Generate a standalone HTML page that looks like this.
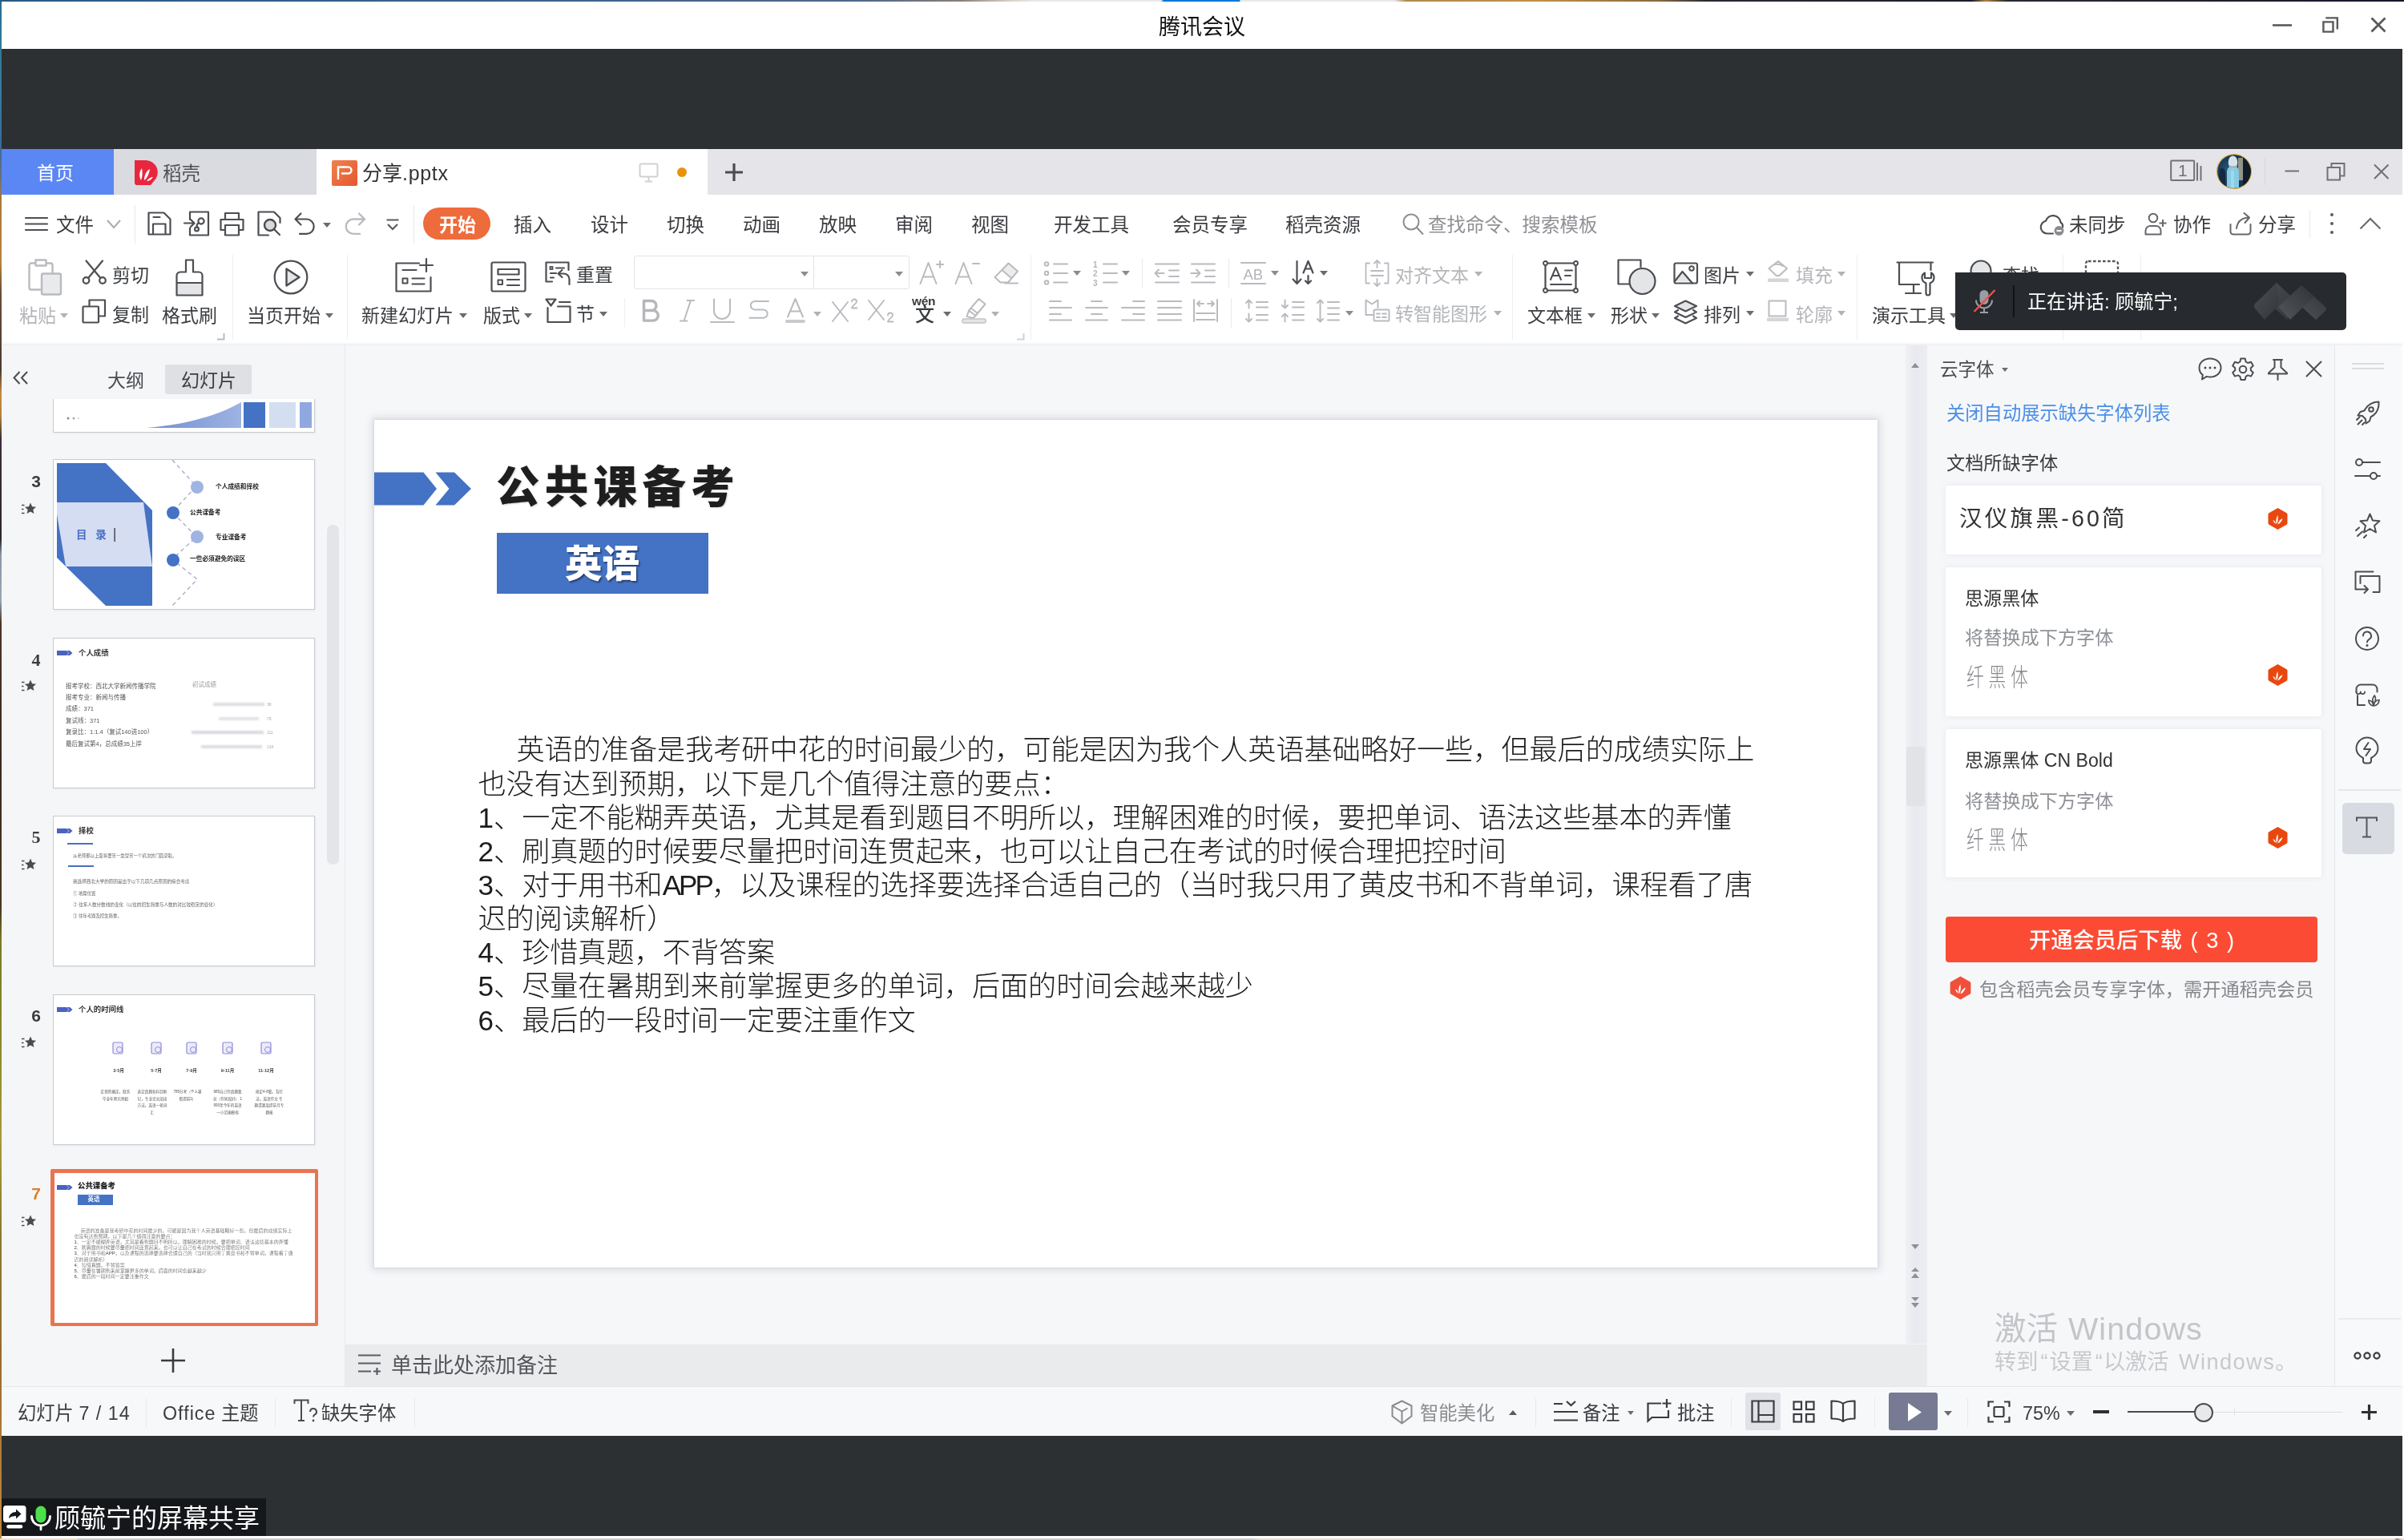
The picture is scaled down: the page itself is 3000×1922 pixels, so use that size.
<!DOCTYPE html>
<html lang="zh-CN">
<head>
<meta charset="utf-8">
<title>腾讯会议</title>
<style>
*{margin:0;padding:0;box-sizing:border-box}
html,body{width:3000px;height:1922px;overflow:hidden}
body{position:relative;will-change:transform;background:#e9dccf;font-family:"Liberation Sans","Noto Sans CJK SC",sans-serif;color:#3a3c40;font-size:23px}
.a{position:absolute}
.t{position:absolute;white-space:nowrap;line-height:32px;height:32px}
svg{position:absolute;overflow:visible}
.ic{fill:none;stroke:#4c4e52;stroke-width:2.2;stroke-linecap:round;stroke-linejoin:round}
.ig{fill:none;stroke:#b9bbbf;stroke-width:2.4;stroke-linecap:round;stroke-linejoin:round}
.car{position:absolute;width:0;height:0;border-left:5px solid transparent;border-right:5px solid transparent;border-top:6px solid #6a6c70}
.carg{border-top-color:#b0b2b6}
.rt{font-size:23px;color:#3a3c40}
.mt{top:265px;font-size:23.5px;color:#3a3c40}
.th{width:327px;height:188px;background:#fff;border:1px solid #c9cbd1;overflow:hidden;box-shadow:1px 1px 2px rgba(0,0,0,.06)}
.tn{font-family:"Liberation Serif","Noto Serif CJK SC",serif;font-weight:700;font-size:22px;color:#3a3c40;line-height:30px;height:30px;width:14px;text-align:center}
.tns{font-family:"Liberation Sans",sans-serif;font-size:21px}
.tl{font-size:7.700px;font-weight:700;color:#222;line-height:12px;height:12px}
.tt{font-size:9.400px;font-weight:700;color:#333;line-height:16px;height:16px}
.tb{font-size:7.500px;color:#555;line-height:12px;height:12px}
.ts{font-size:5.400px;color:#666;line-height:10px;height:10px}
.tm{font-size:5.600px;font-weight:700;color:#444;line-height:10px;height:10px;text-align:center}
.td{font-size:4.600px;color:#555;line-height:8.500px;width:38px;text-align:center;word-break:break-all}
.tx{font-size:6px;font-weight:300;color:#444;line-height:7.200px;white-space:nowrap}
.cd{background:#fff;border-radius:3px;box-shadow:0 0 6px rgba(200,203,212,.35)}
.xh{font-size:27px;font-weight:300;color:#85878b;letter-spacing:7.500px;line-height:40px;height:40px;transform:scale(.8,1.12);transform-origin:0 50%}
.st{top:1748px;font-size:23.300px;color:#3a3c40}
.vs{position:absolute;width:1px;background:#e9eaec}
</style>
</head>
<body>
<!-- desktop strips -->
<div class="a" style="left:0;top:0;width:3px;height:1922px;background:linear-gradient(#2d6a92 0,#2f7a96 3%,#3a7a9c 6%,#3a6a9a 9.500%,#6a6f7a 11.500%,#a87a3c 13%,#b8843c 17%,#6a4e38 19%,#4a3a32 24%,#c58a3e 25.500%,#b8803c 27%,#3a2f3a 28.500%,#2c2630 35%,#8a96a6 36%,#9aa6b4 39%,#4a3426 40.500%,#3a2a1e 50%,#4a3822 59%,#7a7a2a 61%,#8a8a2e 68%,#a89a3a 74%,#8a7a30 80%,#9a6a30 88%,#b07a38 94%,#c08a3e 100%)"></div>
<div class="a" style="left:0;top:0;width:3000px;height:2px;background:linear-gradient(90deg,#2a5a84 0,#3a628c 20%,#50688a 36%,#8a8078 40%,#d8d0c8 42%,#e8e8e8 43%,#e8e8e8 48.300%,#0078d7 48.400%,#0078d7 51.550%,#e8e8e8 51.600%,#e8e8e8 58%,#b08a50 58.500%,#c09048 64%,#8a6a40 69%,#2a2a34 71%,#1a1e2c 82%,#b08040 82.600%,#2a2a34 83.500%,#15182a 100%)"></div>
<div class="a" style="left:0;top:1920px;width:3000px;height:2px;background:linear-gradient(90deg,#ecdccb 0,#ecdccb 3.200%,#c9c9c9 3.250%,#c9c9c9 52%,#e9dccf 52.500%,#e9dccf 99.600%,#8a7a70 99.700%,#e9dccf 99.900%)"></div>
<!-- meeting window -->
<div id="win" class="a" style="left:2px;top:2px;width:2998px;height:1918px;background:#fff"></div>
<div id="titlebar" class="a" style="left:2px;top:1.500px;width:2998px;height:59.500px;background:#fff"></div>
<div id="dark1" class="a" style="left:2px;top:61px;width:2996px;height:125px;background:#2c3033"></div>
<div id="dark2" class="a" style="left:2px;top:1792px;width:2996px;height:125px;background:#2c3033"></div>
<!-- shared screen -->
<div id="screen" class="a" style="left:2px;top:186px;width:2996px;height:1606px;background:#f5f6f8;overflow:hidden">
</div>

<!-- ===== title bar ===== -->
<div class="t" style="left:1446px;top:17px;font-size:27px;color:#111;line-height:34px;height:34px">腾讯会议</div>
<svg style="left:2836px;top:20px" width="150" height="24" viewBox="0 0 150 24">
 <path d="M0 11.5h24" stroke="#58595b" stroke-width="2.6" fill="none"/>
 <path d="M63.400 7.400h12.100v12.200h-12.100z M66.300 2.350h14.550v14.250" stroke="#58595b" stroke-width="2.400" fill="none"/>
 <path d="M123.5 2.5l17 17M140.5 2.5l-17 17" stroke="#58595b" stroke-width="2.8" fill="none"/>
</svg>

<!-- ===== WPS tab bar ===== -->
<div class="a" style="left:2px;top:186px;width:2996px;height:57px;background:#e5e5e9"></div>
<div class="a" style="left:2px;top:186px;width:140px;height:57px;background:#5b87f4"></div>
<div class="t" style="left:46px;top:200px;font-size:23px;color:#fff">首页</div>
<div class="a" style="left:142px;top:186px;width:253px;height:57px;background:#d9dbe0"></div>
<svg style="left:167px;top:200px" width="30" height="32" viewBox="0 0 30 32">
 <path d="M1 0h14a15 15 0 0 1 10 26l-4 5H4a3 3 0 0 1-3-3z" fill="#e8273f"/>
 <path d="M9 25c-3-6-2-11 1-15 1 5 1 10-1 15z M13 25c0-7 3-12 7-14-1 6-3 11-7 14z M16 26c2-3 5-5 8-5-2 3-5 5-8 5z" fill="#fff"/>
</svg>
<div class="t" style="left:203px;top:201px;font-size:23.5px;color:#4e5054">稻壳</div>
<div class="a" style="left:395px;top:186px;width:488px;height:58px;background:#fff"></div>
<svg style="left:414px;top:200px" width="32" height="32" viewBox="0 0 32 32">
 <defs><linearGradient id="pg" x1="0" y1="0" x2="1" y2="1"><stop offset="0" stop-color="#f0814f"/><stop offset="1" stop-color="#e5572d"/></linearGradient></defs>
 <rect x="0" y="0" width="32" height="32" rx="2" fill="url(#pg)"/>
 <path d="M8 24V8.5h12.5a4 4 0 0 1 0 8H12" fill="none" stroke="#fff" stroke-width="2.4"/>
</svg>
<div class="t" style="left:452px;top:199px;font-size:25px;color:#333;line-height:34px;height:34px">分享<span style="letter-spacing:.700px">.pptx</span></div>
<svg style="left:797px;top:203px" width="26" height="26" viewBox="0 0 26 26">
 <rect x="1.5" y="1.5" width="22" height="16" rx="2" fill="none" stroke="#cfd1d5" stroke-width="2"/>
 <path d="M12.5 18v5M8 23.5h9" stroke="#cfd1d5" stroke-width="2" fill="none"/>
</svg>
<div class="a" style="left:845px;top:209px;width:12px;height:12px;border-radius:6px;background:#e8930c"></div>
<svg style="left:904px;top:203px" width="24" height="24" viewBox="0 0 24 24"><path d="M12 1v22M1 12h22" stroke="#4a4c50" stroke-width="3.2" fill="none"/></svg>
<!-- right controls -->
<svg style="left:2707px;top:199px" width="44" height="30" viewBox="0 0 44 30">
 <rect x="2.200" y="1.500" width="29" height="24.500" rx="1" fill="none" stroke="#707276" stroke-width="2"/>
 <path d="M35 4v22.500M39.500 8v18.500" stroke="#707276" stroke-width="2" fill="none"/>
</svg>
<div class="t" style="left:2718px;top:198px;font-size:21px;color:#707276;line-height:30px;height:30px">1</div>
<svg style="left:2765px;top:191px" width="46" height="46" viewBox="0 0 46 46"><defs><clipPath id="avc"><circle cx="23" cy="23" r="20.800"/></clipPath><radialGradient id="avg" cx=".4" cy=".5" r=".7"><stop offset="0" stop-color="#2c5f80"/><stop offset=".6" stop-color="#173650"/><stop offset="1" stop-color="#0f1e30"/></radialGradient></defs><circle cx="23" cy="23" r="22" fill="#d2a548"/><g clip-path="url(#avc)"><rect x="0" y="0" width="46" height="46" fill="url(#avg)"/><rect x="28" y="6" width="6.500" height="28" fill="#a9a48e" opacity=".85"/><rect x="34" y="4" width="10" height="40" fill="#101c2a"/><path d="M5 20c3-2 6-1 7 3v20H3z" fill="#122a42"/><path d="M14 46V24c0-5 3-8 7.500-8s7.500 3 7.500 8v22z" fill="#86cbe4"/><path d="M19 46V22h4v24z" fill="#a9def0" opacity=".7"/><ellipse cx="21.500" cy="11.500" rx="5.800" ry="8" fill="#d4e3ea"/><path d="M16.500 14c1 3 9 3 10.500 0l-1 5h-8z" fill="#9fb8c4"/></g></svg>
<div class="vs" style="left:2826px;top:197px;height:34px;background:#d6d7db"></div>
<svg style="left:2848px;top:200px" width="140" height="28" viewBox="0 0 140 28">
 <path d="M3.500 13.500h17.500" stroke="#707276" stroke-width="2" fill="none"/>
 <path d="M56.500 9h15.500v15.500H56.500z M61.500 8.500V4h16v15.500H73" stroke="#707276" stroke-width="2" fill="none"/>
 <path d="M115 5.500l17.500 17.500M132.500 5.500L115 23" stroke="#707276" stroke-width="2.100" fill="none"/>
</svg>

<!-- ===== menu row ===== -->
<div class="a" style="left:2px;top:243px;width:2996px;height:187px;background:#fff"></div>
<svg style="left:31px;top:270px" width="30" height="20" viewBox="0 0 30 20"><path class="ic" d="M1 2h27M1 9.5h27M1 17h27" style="stroke-width:2.2"/></svg>
<div class="t mt" style="left:70px">文件</div>
<svg style="left:133px;top:274px" width="18" height="12" viewBox="0 0 18 12"><path d="M1 1l8 9 8-9" fill="none" stroke="#a9abaf" stroke-width="2"/></svg>
<div class="vs" style="left:168px;top:256px;height:48px"></div>
<svg style="left:184px;top:264px" width="30" height="30" viewBox="0 0 30 30"><path class="ic" d="M1.5 1.5h19l8 8v19h-27z M7 28V15.5h15.5V28 M7.5 7h8"/></svg>
<svg style="left:229px;top:263px" width="33" height="32" viewBox="0 0 33 32"><path class="ic" d="M8 11V1.500h23v29H8v-9 M1 15.500h12 M9 11l4.500 4.500L9 20"/><circle class="ic" cx="22" cy="13" r="3.600"/><circle class="ic" cx="16.500" cy="23" r="2.400"/><path class="ic" d="M19 15.500c-3 1-3 4-1 5.500"/></svg>
<svg style="left:274px;top:264px" width="32" height="32" viewBox="0 0 32 32"><path class="ic" d="M7 10V2h17v8 M7 23H1.500V10h28v13H24 M7 17h17v12.500H7z"/></svg>
<svg style="left:321px;top:263px" width="32" height="32" viewBox="0 0 32 32"><path class="ic" d="M14 30.500H1.500v-29H21l7.500 7.500v6"/><circle cx="16" cy="18" r="7" fill="#d8d9dc" stroke="#4a4c50" stroke-width="2.400"/><path class="ic" d="M21.500 23.500l6.500 6.500"/></svg>
<svg style="left:367px;top:265px" width="28" height="30" viewBox="0 0 28 30"><path class="ic" d="M1.500 8.500h14a9.200 9.200 0 0 1 0 18.400H7 M8.500 1.500l-7 7 7 7"/></svg>
<div class="car" style="left:403px;top:278px"></div>
<svg style="left:430px;top:265px" width="28" height="30" viewBox="0 0 28 30"><path class="ig" d="M25 8.500H11a9.200 9.200 0 0 0 0 18.400h8 M18 1.500l7 7-7 7"/></svg>
<svg style="left:482px;top:273px" width="16" height="16" viewBox="0 0 16 16"><path d="M0.500 1.500h15M2 7l6 6 6-6" fill="none" stroke="#5a5c60" stroke-width="2.200"/></svg>
<div class="vs" style="left:516px;top:256px;height:48px"></div>
<div class="a" style="left:528px;top:259px;width:84px;height:40px;border-radius:20px;background:#ee6b3b"></div>
<div class="t mt" style="left:548px;color:#fff;font-weight:700;font-size:23px">开始</div>
<div class="t mt" style="left:641px">插入</div>
<div class="t mt" style="left:737px">设计</div>
<div class="t mt" style="left:832px">切换</div>
<div class="t mt" style="left:927px">动画</div>
<div class="t mt" style="left:1022px">放映</div>
<div class="t mt" style="left:1117px">审阅</div>
<div class="t mt" style="left:1212px">视图</div>
<div class="t mt" style="left:1315px">开发工具</div>
<div class="t mt" style="left:1463px">会员专享</div>
<div class="t mt" style="left:1604px">稻壳资源</div>
<svg style="left:1750px;top:266px" width="28" height="28" viewBox="0 0 28 28"><circle cx="11" cy="11" r="9.500" fill="none" stroke="#8a8c90" stroke-width="2"/><path d="M18 18l8 8.500" stroke="#8a8c90" stroke-width="2" fill="none"/></svg>
<div class="t mt" style="left:1782px;color:#8e9094">查找命令、搜索模板</div>
<svg style="left:2545px;top:265px" width="33" height="30" viewBox="0 0 33 30"><path class="ic" d="M17 26.500H9.500a8 8 0 0 1-1.500-15.800 9.500 9.500 0 0 1 18.500 1.800 6 6 0 0 1 2.500 6"/><circle cx="24.500" cy="23" r="6" fill="#8a8c90"/><path d="M21.500 23h6" stroke="#fff" stroke-width="2"/></svg>
<div class="t mt" style="left:2582px">未同步</div>
<svg style="left:2676px;top:264px" width="30" height="30" viewBox="0 0 30 30"><circle cx="11" cy="8" r="5.300" fill="none" stroke="#66686c" stroke-width="2"/><path d="M1.500 28.500v-4.500a6 6 0 0 1 6-6h7a6 6 0 0 1 6 6v4.500z" fill="none" stroke="#66686c" stroke-width="2" stroke-linejoin="round"/><path d="M23 10v9M18.500 14.500h9" stroke="#66686c" stroke-width="2" fill="none"/></svg>
<div class="t mt" style="left:2712px">协作</div>
<svg style="left:2782px;top:264px" width="30" height="30" viewBox="0 0 30 30"><path d="M1.500 16v9a3.500 3.500 0 0 0 3.500 3.500h18a3.500 3.500 0 0 0 3.500-3.500v-9" fill="none" stroke="#66686c" stroke-width="2" stroke-linecap="round"/><path d="M9 21c1-8 6-13 15-13.500M18.500 2l6.500 5.500-5.500 6.500" fill="none" stroke="#66686c" stroke-width="2" stroke-linecap="round" stroke-linejoin="round"/></svg>
<div class="t mt" style="left:2818px">分享</div>
<div class="vs" style="left:2882px;top:262px;height:36px"></div>
<div class="a" style="left:2908px;top:266px;width:4px;height:4px;border-radius:2px;background:#5a5c60;box-shadow:0 11px 0 #5a5c60,0 22px 0 #5a5c60"></div>
<svg style="left:2944px;top:271px" width="28" height="16" viewBox="0 0 28 16"><path d="M1.500 14.500l12.500-12.500 12.500 12.500" fill="none" stroke="#6a6c70" stroke-width="2.200"/></svg>

<!-- ===== ribbon (left part) ===== -->
<svg style="left:35px;top:323px" width="43" height="46" viewBox="0 0 43 46"><path class="ig" d="M9 5.500H4a2.500 2.500 0 0 0-2.500 2.500v28A2.500 2.500 0 0 0 4 38.500h11 M23 5.500h5a2.500 2.500 0 0 1 2.500 2.500v9 M9.500 1.500h13v7h-13z"/><rect x="17" y="18.500" width="24" height="26" rx="2" fill="#e9eaec" stroke="#b9bbbf" stroke-width="2.400"/></svg>
<div class="t rt" style="left:24px;top:378px;color:#b4b6ba">粘贴</div>
<div class="car carg" style="left:75px;top:391px"></div>
<svg style="left:102px;top:324px" width="32" height="31" viewBox="0 0 32 31"><path class="ic" d="M5.500 1.500l17.500 21M26 1.500L8.500 22.500"/><circle class="ic" cx="5.500" cy="26" r="3.800"/><circle class="ic" cx="26" cy="26" r="3.800"/></svg>
<div class="t rt" style="left:140px;top:328px">剪切</div>
<svg style="left:102px;top:373px" width="31" height="31" viewBox="0 0 31 31"><path class="ic" d="M9.500 9V1.500h19.500v20H21.500"/><rect class="ic" x="1.500" y="9.500" width="19.500" height="20" rx="1"/></svg>
<div class="t rt" style="left:140px;top:377px">复制</div>
<svg style="left:219px;top:323px" width="35" height="47" viewBox="0 0 35 47"><rect x="1.500" y="30" width="32" height="15.500" fill="#e4e5e7"/><path class="ic" d="M13 1.500h9v15h7a4.500 4.500 0 0 1 4.500 4.500v24.500h-32V21A4.500 4.500 0 0 1 6 16.500h7z M1.500 30h32"/></svg>
<div class="t rt" style="left:202px;top:378px">格式刷</div>
<svg style="left:271px;top:416px" width="10" height="9" viewBox="0 0 10 9"><path d="M8.500 0v7.500H0" fill="none" stroke="#b9bbbf" stroke-width="2"/></svg>
<div class="vs" style="left:290px;top:318px;height:106px;background:#eeeff1"></div>
<svg style="left:341px;top:324px" width="44" height="44" viewBox="0 0 44 44"><circle class="ic" cx="22" cy="22" r="20.300"/><path d="M16.500 11.500v21l16-10.500z" fill="#e4e5e7" stroke="#4a4c50" stroke-width="2.400" stroke-linejoin="round"/></svg>
<div class="t rt" style="left:308px;top:378px">当页开始</div>
<div class="car" style="left:406px;top:391px"></div>
<div class="vs" style="left:433px;top:318px;height:106px;background:#eeeff1"></div>
<svg style="left:493px;top:322px" width="48" height="43" viewBox="0 0 48 43"><path class="ic" d="M30 6.500H1.500v35h43V24 M9.500 15h17 M21.500 25.500h15M21.500 32.500h15 M39 1v16M31 9h16"/><rect class="ic" x="9.500" y="25.500" width="6" height="6" style="stroke-width:2"/></svg>
<div class="t rt" style="left:451px;top:378px">新建幻灯片</div>
<div class="car" style="left:573px;top:391px"></div>
<svg style="left:612px;top:326px" width="45" height="39" viewBox="0 0 45 39"><rect class="ic" x="1.500" y="1.500" width="42" height="36" rx="2"/><rect class="ic" x="9.500" y="10" width="26" height="6.500" style="stroke-width:2.200"/><rect class="ic" x="9.500" y="23.500" width="5.500" height="5.500" style="stroke-width:2"/><path class="ic" d="M21 23h15M21 30h15" style="stroke-width:2.200"/></svg>
<div class="t rt" style="left:603px;top:378px">版式</div>
<div class="car" style="left:654px;top:391px"></div>
<svg style="left:680px;top:326px" width="33" height="31" viewBox="0 0 33 31"><path class="ic" d="M29.500 11V1.500h-28v24H9 M14 8.500h10 M7 15h7M7 20.500h4"/><rect x="6.500" y="7" width="3" height="3" fill="none" stroke="#4a4c50" stroke-width="1.800"/><path class="ic" d="M30.500 29v-6.500a7 7 0 0 0-7-7H17 M21.500 11l-5 4.500 5 4.500"/></svg>
<div class="t rt" style="left:719px;top:327px">重置</div>
<svg style="left:680px;top:372px" width="33" height="32" viewBox="0 0 33 32"><path class="ic" d="M1.500 1.500h12l-6 8z M18 5h13.500 M3.500 12v18h28V10.500H16"/></svg>
<div class="t rt" style="left:719px;top:376px">节</div>
<div class="car" style="left:748px;top:389px"></div>
<div class="vs" style="left:779px;top:372px;height:36px;background:#eeeff1"></div>
<!-- font boxes -->
<div class="a" style="left:791px;top:319px;width:344px;height:42px;border:1.500px solid #e3e4e7;border-radius:3px;background:#fff"></div>
<div class="vs" style="left:1015px;top:320px;height:40px;background:#e3e4e7"></div>
<div class="car" style="left:999px;top:339px;border-top-color:#8a8c90"></div>
<div class="car" style="left:1117px;top:339px;border-top-color:#8a8c90"></div>
<svg style="left:1147px;top:324px" width="32" height="32" viewBox="0 0 32 32"><path class="ig" d="M1.500 30L11.500 4 21.500 30 M5 21.500h13 M22 6h8M26 2v8" style="stroke-width:2"/></svg>
<svg style="left:1191px;top:324px" width="32" height="32" viewBox="0 0 32 32"><path class="ig" d="M1.500 30L11.500 4 21.500 30 M5 21.500h13 M23 5h8" style="stroke-width:2"/></svg>
<svg style="left:1240px;top:326px" width="32" height="30" viewBox="0 0 32 30"><path d="M18.500 2.500l11.500 10-7 8.500-11.500-10z" fill="#ececee"/><path class="ig" d="M18.500 2.500l11.500 10-12 14H8.500l-7-6.500z M11 11.500l11.500 10 M14 27.500h16" style="stroke-width:2"/></svg>
<!-- B I U S A X2 X2 wen highlight -->
<svg style="left:801px;top:373px" width="24" height="30" viewBox="0 0 24 30"><path d="M2.500 2.500h9.500a6 6 0 0 1 0 12h-9.500z M2.500 14.500h11.500a6.300 6.300 0 0 1 0 12.600H2.500z" fill="none" stroke="#b4b6ba" stroke-width="3.400" stroke-linejoin="round"/></svg>
<svg style="left:848px;top:373px" width="20" height="30" viewBox="0 0 20 30"><path class="ig" d="M14 2L5.500 27.500 M9.500 2h8.500 M1 27.500h8.500" style="stroke-width:2"/></svg>
<svg style="left:886px;top:372px" width="31" height="32" viewBox="0 0 31 32"><path class="ig" d="M5 1.500v14.500a10 10 0 0 0 20 0V1.500 M1 30h29" style="stroke-width:2"/></svg>
<svg style="left:934px;top:374px" width="27" height="25" viewBox="0 0 27 25"><path class="ig" d="M25 2H8a5.200 5.200 0 0 0 0 10.400h10.500a5.200 5.200 0 0 1 0 10.400H1.500" style="stroke-width:2"/></svg>
<svg style="left:979px;top:371px" width="27" height="33" viewBox="0 0 27 33"><path class="ig" d="M4 24.500L13.500 2 23 24.500 M7.500 17.500h12" style="stroke-width:2"/><rect x="1" y="28" width="25" height="4" rx="2" fill="#c8cacd"/></svg>
<div class="car carg" style="left:1015px;top:389px"></div>
<svg style="left:1037px;top:371px" width="34" height="32" viewBox="0 0 34 32"><path class="ig" d="M2 6l19 24M21 6L2 30" style="stroke-width:2"/><path class="ig" d="M26 5.500a3 3 0 0 1 6 0c0 2.500-6 5-6 8h6.500" style="stroke-width:1.800"/></svg>
<svg style="left:1082px;top:371px" width="34" height="34" viewBox="0 0 34 34"><path class="ig" d="M2 4l19 24M21 4L2 28" style="stroke-width:2"/><path class="ig" d="M26 22.500a3 3 0 0 1 6 0c0 2.500-6 5-6 8h6.500" style="stroke-width:1.800"/></svg>
<div class="t" style="left:1138px;top:366px;font-size:15.500px;font-weight:700;color:#3a3c40;line-height:20px;height:20px;letter-spacing:-.3px">wén</div>
<div class="t" style="left:1142px;top:380px;font-size:24px;color:#3a3c40;line-height:26px;height:26px;font-weight:500">文</div>
<div class="car" style="left:1177px;top:389px"></div>
<svg style="left:1200px;top:371px" width="32" height="33" viewBox="0 0 32 33"><path class="ig" d="M21.500 2l8 6.500-12 14.500-8.500-6.500z M9 16.500L6.500 24l8 2 3-3 M11.500 13.500l8.500 6.500" style="stroke-width:2"/><rect x="1" y="27" width="29" height="5" rx="2" fill="#e4e5e7" stroke="#c0c2c5" stroke-width="1.500"/></svg>
<div class="car carg" style="left:1237px;top:389px"></div>
<svg style="left:1269px;top:416px" width="10" height="9" viewBox="0 0 10 9"><path d="M8.500 0v7.500H0" fill="none" stroke="#d0d2d5" stroke-width="2"/></svg>
<div class="vs" style="left:1286px;top:318px;height:106px;background:#eeeff1"></div>

<!-- ===== ribbon (paragraph part) ===== -->
<svg style="left:1302px;top:325px" width="32" height="32" viewBox="0 0 32 32"><g class="ig" style="stroke-width:2"><circle cx="4" cy="4.500" r="2.300"/><circle cx="4" cy="16" r="2.300"/><circle cx="4" cy="27.500" r="2.300"/><path d="M13 4.500h17M13 16h17M13 27.500h17"/></g></svg>
<div class="car" style="left:1339px;top:338px;border-top-color:#8a8c90"></div>
<svg style="left:1363px;top:324px" width="32" height="34" viewBox="0 0 32 34"><g class="ig" style="stroke-width:2"><path d="M14 5.500h17M14 17h17M14 28.500h17"/></g><text x="1" y="9.500" font-size="10" font-weight="700" fill="#b4b6ba" font-family="Liberation Sans,sans-serif">1</text><text x="1" y="21" font-size="10" font-weight="700" fill="#b4b6ba" font-family="Liberation Sans,sans-serif">2</text><text x="1" y="32.500" font-size="10" font-weight="700" fill="#b4b6ba" font-family="Liberation Sans,sans-serif">3</text></svg>
<div class="car" style="left:1400px;top:338px;border-top-color:#8a8c90"></div>
<div class="vs" style="left:1425px;top:323px;height:37px"></div>
<svg style="left:1440px;top:325px" width="33" height="32" viewBox="0 0 33 32"><path class="ig" d="M2 4.500h29M2 27.500h29M19 12.500h12M19 20h12 M1.500 16h11M6 11.500l-4.500 4.500 4.500 4.500" style="stroke-width:2"/></svg>
<svg style="left:1485px;top:325px" width="33" height="32" viewBox="0 0 33 32"><path class="ig" d="M2 4.500h29M2 27.500h29M19 12.500h12M19 20h12 M1.500 16h11M8 11.500l4.500 4.500-4.500 4.500" style="stroke-width:2"/></svg>
<div class="vs" style="left:1533px;top:323px;height:37px"></div>
<svg style="left:1548px;top:325px" width="33" height="32" viewBox="0 0 33 32"><path class="ig" d="M1 3h30M1 29h30" style="stroke-width:2"/><text x="3.500" y="23.500" font-size="18.500" fill="#b4b6ba" font-family="Liberation Sans,sans-serif">AB</text></svg>
<div class="car" style="left:1586px;top:338px;border-top-color:#8a8c90"></div>
<svg style="left:1612px;top:324px" width="28" height="34" viewBox="0 0 28 34"><path class="ic" d="M6.500 2v28M1.500 24.500l5 5.500 5-5.500 M20.500 20v10M17 26.500l3.500 3.500 3.500-3.500 M14.500 16.500L20.500 2l6 14.500M16.500 11.500h8" style="stroke-width:2.200"/></svg>
<div class="car" style="left:1647px;top:338px"></div>
<svg style="left:1703px;top:324px" width="31" height="34" viewBox="0 0 31 34"><path class="ig" d="M6 4.500H1.500v25H6 M25 4.500h4.500v25H25 M8 14h15M8 20h15 M15.500 1v9M12 4.500l3.500-3.500 3.500 3.500 M15.500 33v-9M12 29.500l3.500 3.500 3.500-3.500" style="stroke-width:1.800"/></svg>
<div class="t rt" style="left:1741px;top:328px;color:#b4b6ba">对齐文本</div>
<div class="car carg" style="left:1840px;top:339px"></div>
<!-- row 2 -->
<svg style="left:1309px;top:374px" width="212" height="28" viewBox="0 0 212 28"><g class="ig" style="stroke-width:2"><path d="M1 2h14M1 10h27M1 18h14M1 25.500h27"/><path d="M53 2h13M46 10h27M53 18h13M46 25.500h27"/><path d="M105 2h14M91 10h28M105 18h14M91 25.500h28"/><path d="M136 2h29M136 10h29M136 18h29M136 25.500h29"/><path d="M181 0v27M210 0v27M185 5h8M188 2l-3 3 3 3M206 5h-8M203 2l3 3-3 3M184 17h23M184 25h23"/></g></svg>
<div class="vs" style="left:1536px;top:372px;height:37px"></div>
<svg style="left:1553px;top:373px" width="120" height="30" viewBox="0 0 120 30"><g class="ig" style="stroke-width:2"><path d="M5.500 1.500v10M2 5l3.500-3.500 3.500 3.500M5.500 28.500v-10M2 25l3.500 3.500 3.500-3.500M15 4h14M15 10.500h14M15 20h14M15 26.500h14"/><path d="M50.500 1.500v10M47 8l3.500 3.500 3.500-3.500M50.500 28.500v-10M47 22l3.500-3.500 3.500 3.500M60 4h14M60 10.500h14M60 20h14M60 26.500h14"/><path d="M94.500 1.500v27M91 5l3.500-3.500 3.500 3.500M91 25l3.500 3.500 3.500-3.500M104 4h14M104 11.500h14M104 19h14M104 26.500h14"/></g></svg>
<div class="car" style="left:1679px;top:388px;border-top-color:#8a8c90"></div>
<svg style="left:1703px;top:372px" width="32" height="32" viewBox="0 0 32 32"><path class="ig" d="M10 21H1.500V2.500l7.500 5 7.500-5V12" style="stroke-width:2"/><rect class="ig" x="11.500" y="14.500" width="19" height="14" rx="1.500" style="stroke-width:2"/><path class="ig" d="M15 19.500h4M22 19.500h5M15 24h4M22 24h5" style="stroke-width:1.800"/></svg>
<div class="t rt" style="left:1741px;top:376px;color:#b4b6ba">转智能图形</div>
<div class="car carg" style="left:1864px;top:388px"></div>
<div class="vs" style="left:1887px;top:318px;height:106px;background:#eeeff1"></div>
<!-- ===== ribbon (insert part) ===== -->
<svg style="left:1925px;top:325px" width="46" height="43" viewBox="0 0 46 43"><rect class="ic" x="3.500" y="3.500" width="38" height="34" style="stroke-width:2.200"/><g fill="#fff" stroke="#4a4c50" stroke-width="1.800"><circle cx="3.500" cy="3.500" r="2.500"/><circle cx="41.500" cy="3.500" r="2.500"/><circle cx="3.500" cy="37.500" r="2.500"/><circle cx="41.500" cy="37.500" r="2.500"/></g><path class="ic" d="M10 24l6.500-15 6.500 15M12.500 19h8 M28 12.500h9M28 19h7 M10 30h26" style="stroke-width:2"/></svg>
<div class="t rt" style="left:1906px;top:378px">文本框</div>
<div class="car" style="left:1981px;top:391px"></div>
<svg style="left:2018px;top:323px" width="49" height="46" viewBox="0 0 49 46"><path class="ic" d="M15 31.500H1.500v-30h28V10" style="stroke-width:2.200"/><circle cx="31.500" cy="28" r="16" fill="#e4e5e7" stroke="#4a4c50" stroke-width="2.200"/></svg>
<div class="t rt" style="left:2010px;top:378px">形状</div>
<div class="car" style="left:2061px;top:391px"></div>
<svg style="left:2088px;top:327px" width="32" height="28" viewBox="0 0 32 28"><path d="M2 24l9.500-12 10 12.500z" fill="#e4e5e7"/><rect class="ic" x="1.500" y="1.500" width="28.500" height="25" rx="2" style="stroke-width:2.200"/><circle class="ic" cx="23" cy="8" r="2.800" style="stroke-width:2"/><path class="ic" d="M2 24l9.500-12 12.500 14.500" style="stroke-width:2.200"/></svg>
<div class="t rt" style="left:2126px;top:328px">图片</div>
<div class="car" style="left:2179px;top:339px"></div>
<svg style="left:2088px;top:374px" width="31" height="31" viewBox="0 0 31 31"><path d="M15.500 1.500L29 8l-13.500 6.500L2 8z" fill="#e4e5e7"/><path class="ic" d="M15.500 1.500L29 8l-13.500 6.500L2 8z M6 13l-4 2.500 13.500 6.500L29 15.500 25 13 M6 20.500l-4 2.500 13.500 6.500L29 23l-4-2.500" style="stroke-width:2.200"/></svg>
<div class="t rt" style="left:2126px;top:377px">排列</div>
<div class="car" style="left:2179px;top:388px"></div>
<svg style="left:2205px;top:324px" width="28" height="29" viewBox="0 0 28 29"><path class="ig" d="M14 2l11 9-9.500 9h-4L2.500 11z M6 8c3-3 10-3 14 0" style="stroke-width:2"/><rect x="1" y="23.500" width="26" height="4.500" rx="1" fill="#d4d6d9"/></svg>
<div class="t rt" style="left:2241px;top:328px;color:#b4b6ba">填充</div>
<div class="car carg" style="left:2293px;top:339px"></div>
<svg style="left:2204px;top:374px" width="29" height="28" viewBox="0 0 29 28"><rect class="ig" x="3.500" y="1.500" width="21" height="19" style="stroke-width:2"/><rect x="1" y="22.500" width="27" height="4.500" rx="1" fill="#d4d6d9"/></svg>
<div class="t rt" style="left:2241px;top:377px;color:#b4b6ba">轮廓</div>
<div class="car carg" style="left:2293px;top:388px"></div>
<div class="vs" style="left:2317px;top:318px;height:106px;background:#eeeff1"></div>
<svg style="left:2367px;top:325px" width="48" height="44" viewBox="0 0 48 44"><path class="ic" d="M28 30H3V2.500h39.500V12 M0.500 2.500h44.500 M21 30v10.500M11 41h19" style="stroke-width:2.200"/><path d="M35 15.500a7 7 0 0 0 1.500 12.800V41a2.500 2.500 0 0 0 5 0V28.300A7 7 0 0 0 43 15.500v6.500h-8z" fill="#fff" stroke="#4a4c50" stroke-width="2.200" stroke-linejoin="round"/></svg>
<div class="t rt" style="left:2336px;top:378px">演示工具</div>
<div class="car" style="left:2433px;top:391px"></div>
<svg style="left:2458px;top:324px" width="30" height="30" viewBox="0 0 30 30"><circle cx="14" cy="14" r="12.500" fill="#e4e5e7" stroke="#4a4c50" stroke-width="2.200"/></svg>
<div class="t rt" style="left:2499px;top:328px">查找</div>
<div class="vs" style="left:2574px;top:318px;height:106px;background:#eeeff1"></div>
<svg style="left:2601px;top:324px" width="44" height="32" viewBox="0 0 44 32"><rect x="2" y="2" width="40" height="28" rx="3" fill="none" stroke="#55575b" stroke-width="2.400" stroke-dasharray="3.600 2.400"/></svg>
<div class="vs" style="left:2671px;top:318px;height:106px;background:#eeeff1"></div>
<!-- ribbon bottom edge -->
<div class="a" style="left:2px;top:427px;width:2996px;height:6px;background:linear-gradient(#fff,#f3f3f5 45%,#e9eaed 70%,#f1f2f4)"></div>
<!-- ===== speaking overlay ===== -->
<div class="a" style="left:2440px;top:340px;width:488px;height:72px;background:#272a2e;border-radius:0 5px 5px 5px"></div>
<svg style="left:2462px;top:360px" width="30" height="32" viewBox="0 0 30 32"><rect x="8.500" y="2" width="11" height="18" rx="5.500" fill="#9a9da3"/><path d="M4 14.500a10 10 0 0 0 20 0M14 24.500v5M9 30h10" fill="none" stroke="#9a9da3" stroke-width="2"/><path d="M1.500 29L27.500 2" stroke="#f0504d" stroke-width="2.400"/></svg>
<div class="a" style="left:2512px;top:356px;width:2px;height:40px;background:#121315"></div>
<div class="t" style="left:2530px;top:360px;font-size:24px;color:#fff;line-height:34px;height:34px">正在讲话: 顾毓宁;</div>
<svg style="left:2810px;top:350px" width="96" height="52" viewBox="0 0 96 52"><defs><linearGradient id="lg1" x1="0" y1="0" x2="1" y2="1"><stop offset="0" stop-color="#4b4f52"/><stop offset="1" stop-color="#33363a"/></linearGradient><linearGradient id="lg2" x1="0" y1="1" x2="1" y2="0"><stop offset="0" stop-color="#54585b"/><stop offset="1" stop-color="#2f3236"/></linearGradient></defs><path d="M31 3l30 28-17 18L14 21z" fill="url(#lg1)" opacity=".9"/><path d="M31 3L4 29a5 5 0 0 0 0 6l12 14 18-18z" fill="url(#lg1)"/><path d="M62 6l30 27a4 4 0 0 1 0 5L80 49 48 20z" fill="url(#lg2)"/><path d="M62 6L33 33l15 16 29-28z" fill="url(#lg2)" opacity=".95"/></svg>

<!-- ===== left slide panel ===== -->
<div class="a" style="left:2px;top:431px;width:429px;height:1299px;background:#f5f6f8"></div>
<div class="vs" style="left:430px;top:431px;height:1299px;background:#e9eaed"></div>
<svg style="left:16px;top:463px" width="20" height="17" viewBox="0 0 20 17"><path d="M8.500 1L1.500 8.500l7 7.500M18 1l-7 7.500 7 7.500" fill="none" stroke="#4a4c50" stroke-width="2"/></svg>
<div class="t" style="left:134px;top:459px;font-size:23px;color:#4a4c50">大纲</div>
<div class="a" style="left:206px;top:455px;width:108px;height:37px;border-radius:3px;background:#dfe0e4"></div>
<div class="t" style="left:226px;top:459px;font-size:23px;color:#3a3c40">幻灯片</div>
<!-- scrollbar -->
<div class="a" style="left:408px;top:655px;width:15px;height:424px;border-radius:7px;background:#e4e5e9"></div>
<!-- thumb 2 (clipped) -->
<div class="a th" style="left:66px;top:498px;height:42px;border-top:none">
 <svg style="left:0;top:0" width="325" height="40" viewBox="0 0 325 40"><defs><linearGradient id="tg2" x1="0" y1="0" x2="1" y2="0"><stop offset="0" stop-color="#6f8fd0"/><stop offset="1" stop-color="#9fb3e3"/></linearGradient></defs><path d="M116 36c50-4 90-16 118-32v32z" fill="url(#tg2)"/><rect x="237" y="4" width="27" height="32" fill="#4472c4"/><rect x="269" y="4" width="33" height="32" fill="#d3dff0"/><rect x="307" y="4" width="15" height="32" fill="#8fa8e0"/><circle cx="18" cy="24" r="1.500" fill="#889"/><circle cx="25" cy="24" r="1.500" fill="#aab"/><circle cx="31" cy="24" r="1" fill="#ccd"/></svg>
</div>
<!-- thumb 3 -->
<div class="t tn tns" style="left:38px;top:586px">3</div>
<svg class="star" style="left:27px;top:627px" width="18" height="16" viewBox="0 0 18 16"><use href="#stari"/></svg>
<div class="a th" style="left:66px;top:573px">
 <svg style="left:0;top:0" width="325" height="186" viewBox="0 0 325 186">
  <path d="M4 4h61l58 59v119H65L4 122z" fill="#4472c4"/>
  <path d="M4 53h108l11 80H15L4 68z" fill="#d5ddf2"/>
  <path d="M148 0l30 33-30 32 30 31-30 28 31 25-31 33" fill="none" stroke="#a3abc2" stroke-width="1.300" stroke-dasharray="5 4"/>
  <circle cx="179" cy="34" r="8" fill="#9fb4e2"/><circle cx="149" cy="66" r="8" fill="#4472c4"/><circle cx="179" cy="96" r="8" fill="#9fb4e2"/><circle cx="149" cy="125" r="8" fill="#4472c4"/>
  <rect x="75.500" y="85" width="1.200" height="17" fill="#223"/>
 </svg>
 <div class="t" style="left:28px;top:84px;font-size:13.500px;font-weight:700;color:#4a70c6;line-height:20px;height:20px;letter-spacing:3.500px">目 录</div>
 <div class="t tl" style="left:202px;top:28px">个人成绩和择校</div>
 <div class="t tl" style="left:170px;top:60px">公共课备考</div>
 <div class="t tl" style="left:202px;top:91px">专业课备考</div>
 <div class="t tl" style="left:170px;top:118px">一些必须避免的误区</div>
</div>
<!-- thumb 4 -->
<div class="t tn" style="left:38px;top:809px">4</div>
<svg class="star" style="left:27px;top:848px" width="18" height="16" viewBox="0 0 18 16"><use href="#stari"/></svg>
<div class="a th" style="left:66px;top:796px">
 <svg style="left:4px;top:14px" width="20" height="8" viewBox="0 0 20 8"><use href="#tarrow"/></svg>
 <div class="t tt" style="left:31px;top:10px">个人成绩</div>
 <div class="t tb" style="left:15px;top:54px">报考学校：西北大学新闻传播学院</div>
 <div class="t tb" style="left:15px;top:68px">报考专业：新闻与传播</div>
 <div class="t tb" style="left:15px;top:82px">成绩：371</div>
 <div class="t tb" style="left:15px;top:97px">复试线：371</div>
 <div class="t tb" style="left:15px;top:111px">复录比：1:1.4（复试140进100）</div>
 <div class="t tb" style="left:15px;top:126px">最后复试第4，总成绩35上岸</div>
 <div class="t tb" style="left:173px;top:52px;color:#9a9ca2">初试成绩</div>
 <div class="a" style="left:199px;top:80px;width:64px;height:4px;background:#dcdde2;filter:blur(1px)"></div><div class="t tb" style="left:266px;top:76px;font-size:5px;color:#aaa">38</div>
 <div class="a" style="left:206px;top:98px;width:50px;height:4px;background:#e2e3e7;filter:blur(1px)"></div><div class="t tb" style="left:266px;top:94px;font-size:5px;color:#aaa">79</div>
 <div class="a" style="left:172px;top:115px;width:90px;height:4px;background:#d8d9df;filter:blur(1px)"></div><div class="t tb" style="left:266px;top:111px;font-size:5px;color:#aaa">111</div>
 <div class="a" style="left:184px;top:133px;width:76px;height:4px;background:#dcdde2;filter:blur(1px)"></div><div class="t tb" style="left:266px;top:129px;font-size:5px;color:#aaa">134</div>
</div>
<!-- thumb 5 -->
<div class="t tn" style="left:38px;top:1030px">5</div>
<svg class="star" style="left:27px;top:1071px" width="18" height="16" viewBox="0 0 18 16"><use href="#stari"/></svg>
<div class="a th" style="left:66px;top:1018px">
 <svg style="left:4px;top:14px" width="20" height="8" viewBox="0 0 20 8"><use href="#tarrow"/></svg>
 <div class="t tt" style="left:31px;top:10px">择校</div>
 <div class="a" style="left:17px;top:33px;width:32px;height:1.500px;background:#4a6fc0"></div>
 <div class="t ts" style="left:24px;top:44px">从老师那以上面将要另一类型另一个机次的门面录取。</div>
 <div class="a" style="left:18px;top:61px;width:32px;height:1.500px;background:#4a6fc0"></div>
 <div class="t ts" style="left:24px;top:76px;font-size:5.600px">我选择西北大学的原因是出于以下几项几点原因的综合考虑</div>
 <div class="t ts" style="left:24px;top:91px">① 地理位置</div>
 <div class="t ts" style="left:24px;top:105px;font-size:5.600px">② 往年人数分数线的变化（以往的招生简章与人数的对比较稳定的变化）</div>
 <div class="t ts" style="left:24px;top:119px">③ 往年考题及招生简章。</div>
</div>
<!-- thumb 6 -->
<div class="t tn tns" style="left:38px;top:1253px">6</div>
<svg class="star" style="left:27px;top:1293px" width="18" height="16" viewBox="0 0 18 16"><use href="#stari"/></svg>
<div class="a th" style="left:66px;top:1241px">
 <svg style="left:4px;top:14px" width="20" height="8" viewBox="0 0 20 8"><use href="#tarrow"/></svg>
 <div class="t tt" style="left:31px;top:10px">个人的时间线</div>
 <svg style="left:0;top:0" width="325" height="186" viewBox="0 0 325 186"><g fill="#ecebfa" stroke="#8d8bd9" stroke-width="1.200"><rect x="74" y="59" width="12" height="14" rx="1.500"/><rect x="122" y="59" width="12" height="14" rx="1.500"/><rect x="166" y="59" width="12" height="14" rx="1.500"/><rect x="211" y="59" width="12" height="14" rx="1.500"/><rect x="259" y="59" width="12" height="14" rx="1.500"/></g><g fill="none" stroke="#8d8bd9" stroke-width="1"><circle cx="82" cy="68" r="3.500"/><circle cx="130" cy="68" r="3.500"/><circle cx="174" cy="68" r="3.500"/><circle cx="219" cy="68" r="3.500"/><circle cx="267" cy="68" r="3.500"/></g></svg>
 <div class="t tm" style="left:63px;top:89px;width:36px">3-5月</div>
 <div class="t tm" style="left:110px;top:89px;width:36px">5-7月</div>
 <div class="t tm" style="left:154px;top:89px;width:36px">7-9月</div>
 <div class="t tm" style="left:199px;top:89px;width:36px">9-11月</div>
 <div class="t tm" style="left:247px;top:89px;width:36px">11-12月</div>
 <div class="a td" style="left:58px;top:117px">定择院确定，联系毕业年师兄师姐</div>
 <div class="a td" style="left:104px;top:117px">选定真题各科目框记，专业论文阅读方法，英语一轮词汇</div>
 <div class="a td" style="left:148px;top:117px">785分考（个人暑假提前2）</div>
 <div class="a td" style="left:198px;top:117px">985自己作真题集总（作同段好） 1993至今年的英语一小范围模拟</div>
 <div class="a td" style="left:250px;top:117px">抢定4-8套。背打法，英语作文 专题遗漏及提前月专题报</div>
</div>
<!-- thumb 7 (selected) -->
<div class="t tn tns" style="left:38px;top:1475px;color:#d9822b">7</div>
<svg class="star" style="left:27px;top:1516px" width="18" height="16" viewBox="0 0 18 16"><use href="#stari"/></svg>
<div class="a" style="left:63px;top:1459px;width:334px;height:196px;background:#ea7450;border-radius:2px"></div>
<div class="a" style="left:67.500px;top:1463.500px;width:325px;height:187px;background:#fff;overflow:hidden">
 <svg style="left:3.500px;top:14px" width="20" height="8" viewBox="0 0 20 8"><use href="#tarrow"/></svg>
 <div class="t tt" style="left:29.500px;top:8px;font-weight:900;color:#222">公共课备考</div>
 <div class="a" style="left:29.500px;top:27px;width:44px;height:13.500px;background:#4472c4"></div>
 <div class="t" style="left:42px;top:27.500px;font-size:7.500px;font-weight:700;color:#fff;line-height:12px;height:12px">英语</div>
 <div class="a tx" style="left:25px;top:69px">
  <div style="text-indent:8px">英语的准备是我考研中花的时间最少的，可能是因为我个人英语基础略好一些，但最后的成绩实际上</div>
  <div>也没有达到预期，以下是几个值得注意的要点：</div>
  <div>1、一定不能糊弄英语，尤其是看到题目不明所以，理解困难的时候，要把单词、语法这些基本的弄懂</div>
  <div>2、刷真题的时候要尽量把时间连贯起来，也可以让自己在考试的时候合理把控时间</div>
  <div>3、对于用书和APP，以及课程的选择要选择合适自己的（当时我只用了黄皮书和不背单词，课程看了唐</div>
  <div>迟的阅读解析）</div>
  <div>4、珍惜真题，不背答案</div>
  <div>5、尽量在暑期到来前掌握更多的单词，后面的时间会越来越少</div>
  <div>6、最后的一段时间一定要注重作文</div>
 </div>
</div>
<svg style="left:200px;top:1682px" width="32" height="32" viewBox="0 0 32 32"><path d="M16 1v30M1 16h30" stroke="#3a3c40" stroke-width="2.600" fill="none"/></svg>
<svg width="0" height="0" style="left:0;top:0"><defs>
 <g id="stari"><path d="M11 0.500l2.100 4.700 5 .5-3.800 3.400 1.100 5-4.400-2.600-4.400 2.600 1.100-5L3.900 5.700l5-.5z" fill="#4a4c50"/><path d="M0 3.500h3.500M0 8.500h2.500M0 13.500h3.500" stroke="#4a4c50" stroke-width="1.600" fill="none"/></g>
 <g id="tarrow"><path d="M0 1h12l3 3-3 3H0z" fill="#4a62c0"/><path d="M12.500 1h3.500l3.500 3-3.500 3h-3.500l3-3z" fill="#4a62c0"/></g>
</defs></svg>

<!-- ===== main editing canvas ===== -->
<div class="a" style="left:431px;top:431px;width:1947px;height:1246px;background:#f6f7f9"></div>
<div class="a" style="left:467px;top:524px;width:1875.500px;height:1058px;background:#fff;box-shadow:0 0 9px 3px rgba(130,134,150,.22),0 0 3px rgba(130,134,150,.25)"></div>
<svg style="left:467px;top:589px" width="124" height="42" viewBox="0 0 124 42"><path d="M0 .5h61.500l16.500 20.500-16.500 20.500H0z" fill="#4472c4"/><path d="M76.500 .5h23.500l21 20.500-21 20.500H76.500l17-20.500z" fill="#4472c4"/></svg>
<div class="t" style="left:619px;top:569px;font-size:54.500px;font-weight:900;color:#1e1e1e;letter-spacing:6.300px;line-height:80px;height:80px;text-shadow:1px 1px 2px rgba(0,0,0,.18)">公共课备考</div>
<div class="a" style="left:620px;top:665px;width:264px;height:76px;background:#4472c4"></div>
<div class="t" style="left:705px;top:670px;font-size:46.500px;font-weight:900;color:#fff;line-height:68px;height:68px;text-shadow:1.500px 1.500px 2px rgba(0,0,0,.45)">英语</div>
<div class="a" id="body" style="left:596.500px;top:915.400px;font-size:35.110px;font-weight:300;color:#1c1c1c;line-height:42.150px;white-space:nowrap">
 <div style="text-indent:48px">英语的准备是我考研中花的时间最少的，可能是因为我个人英语基础略好一些，但最后的成绩实际上</div>
 <div>也没有达到预期，以下是几个值得注意的要点：</div>
 <div>1、一定不能糊弄英语，尤其是看到题目不明所以，理解困难的时候，要把单词、语法这些基本的弄懂</div>
 <div>2、刷真题的时候要尽量把时间连贯起来，也可以让自己在考试的时候合理把控时间</div>
 <div>3、对于用书和<span style="letter-spacing:-3px">APP</span>，以及课程的选择要选择合适自己的（当时我只用了黄皮书和不背单词，课程看了唐</div>
 <div>迟的阅读解析）</div>
 <div>4、珍惜真题，不背答案</div>
 <div>5、尽量在暑期到来前掌握更多的单词，后面的时间会越来越少</div>
 <div>6、最后的一段时间一定要注重作文</div>
</div>
<!-- vertical scrollbar of canvas -->
<div class="a" style="left:2378px;top:431px;width:27px;height:1246px;background:linear-gradient(90deg,#f0f1f4,#e9eaef 40%,#ecedf1)"></div>
<div class="a" style="left:2379px;top:932px;width:23px;height:74px;background:#e2e3e7;border-radius:3px"></div>
<svg style="left:2384px;top:452px" width="12" height="8" viewBox="0 0 12 8"><path d="M6 1l5 6H1z" fill="#8e9096"/></svg>
<svg style="left:2384px;top:1552px" width="12" height="90" viewBox="0 0 12 90"><path d="M1 1h10l-5 6z" fill="#8e9096"/><path d="M6 30l5 5H1zM6 37l5 6H1z M1 67h10l-5 5zM1 74h10l-5 6z" fill="#8e9096"/></svg>
<!-- notes bar -->
<div class="a" style="left:431px;top:1677px;width:1974px;height:53px;background:#eaebed;border-top:1px solid #f4f5f6"></div>
<svg style="left:446px;top:1689px" width="32" height="28" viewBox="0 0 32 28"><path d="M1 2.500h28M1 12.500h28M1 22.500h16 M24.500 18v9M20 22.500h9" stroke="#5a5c60" stroke-width="2.200" fill="none"/></svg>
<div class="t" style="left:488px;top:1686px;font-size:26px;color:#55575b;line-height:36px;height:36px">单击此处添加备注</div>

<!-- ===== right font panel ===== -->
<div class="a" style="left:2405px;top:431px;width:508px;height:1299px;background:#f6f7f9"></div>
<div class="t" style="left:2421px;top:446px;font-size:22.500px;color:#4a4c50">云字体</div>
<div class="car" style="left:2498px;top:459px;border-left-width:4.500px;border-right-width:4.500px;border-top-width:5px"></div>
<svg style="left:2742px;top:445px" width="32" height="32" viewBox="0 0 32 32"><path class="ic" d="M16 2.500c7.700 0 13.500 5 13.500 11.500S23.700 25.500 16 25.500c-1.500 0-3-.2-4.300-.6L6 28.500l.8-5.600C4 20.800 2.500 17.600 2.500 14 2.500 7.500 8.300 2.500 16 2.500z" style="stroke-width:2"/><circle cx="10" cy="14" r="1.500" fill="#4a4c50"/><circle cx="16" cy="14" r="1.500" fill="#4a4c50"/><circle cx="22" cy="14" r="1.500" fill="#4a4c50"/></svg>
<svg style="left:2784px;top:446px" width="30" height="30" viewBox="0 0 30 30"><path class="ic" d="M12.300 1.500h5.400l.9 4 2.600 1.500 3.900-1.200 2.700 4.700-3 2.700v3l3 2.700-2.700 4.700-3.900-1.200-2.600 1.500-.9 4h-5.400l-.9-4-2.600-1.500-3.900 1.200-2.700-4.700 3-2.700v-3l-3-2.700 2.700-4.700 3.900 1.200 2.600-1.500z" style="stroke-width:2"/><circle class="ic" cx="15" cy="15" r="4.300" style="stroke-width:2"/></svg>
<svg style="left:2828px;top:447px" width="29" height="28" viewBox="0 0 29 28"><path class="ic" d="M9 2h11M10.500 2v9.500L3 18.500v1h23v-1l-7.500-7V2M14.500 19.500V27" style="stroke-width:2"/></svg>
<svg style="left:2877px;top:450px" width="21" height="21" viewBox="0 0 21 21"><path class="ic" d="M1.500 1.500l18 18M19.500 1.500l-18 18" style="stroke-width:2"/></svg>
<div class="t" style="left:2429px;top:500px;font-size:23.300px;color:#4a8fe8">关闭自动展示缺失字体列表</div>
<div class="t" style="left:2429px;top:562px;font-size:23.200px;color:#3a3c40">文档所缺字体</div>
<!-- card 1 -->
<div class="a cd" style="left:2428px;top:606px;width:469px;height:86px"></div>
<div class="t" style="left:2445px;top:625px;font-size:28.600px;color:#333;line-height:44px;height:44px;letter-spacing:3.200px">汉仪旗黑-60简</div>
<svg style="left:2829px;top:633px" width="27" height="29" viewBox="0 0 27 29"><use href="#hexb"/></svg>
<!-- card 2 -->
<div class="a cd" style="left:2428px;top:708px;width:469px;height:186px"></div>
<div class="t" style="left:2452px;top:731px;font-size:23.100px;color:#333">思源黑体</div>
<div class="t" style="left:2452px;top:780px;font-size:23.200px;color:#8e9196">将替换成下方字体</div>
<div class="t xh" style="left:2454px;top:826px">纤黑体</div>
<svg style="left:2829px;top:828px" width="27" height="29" viewBox="0 0 27 29"><use href="#hexb"/></svg>
<!-- card 3 -->
<div class="a cd" style="left:2428px;top:910px;width:469px;height:185px"></div>
<div class="t" style="left:2452px;top:933px;font-size:23.100px;color:#333">思源黑体 CN Bold</div>
<div class="t" style="left:2452px;top:984px;font-size:23.200px;color:#8e9196">将替换成下方字体</div>
<div class="t xh" style="left:2454px;top:1029px">纤黑体</div>
<svg style="left:2829px;top:1031px" width="27" height="29" viewBox="0 0 27 29"><use href="#hexb"/></svg>
<!-- red button -->
<div class="a" style="left:2428px;top:1144px;width:464px;height:57px;border-radius:4px;background:#fc4b34"></div>
<div class="t" style="left:2428px;top:1155px;width:464px;text-align:center;font-size:27.300px;font-weight:500;color:#fff;line-height:38px;height:38px;word-spacing:3px">开通会员后下载 ( 3 )</div>
<svg style="left:2432px;top:1217px" width="29" height="32" viewBox="0 0 27 29"><use href="#hexr"/></svg>
<div class="t" style="left:2470px;top:1219px;font-size:23.200px;color:#86888c">包含稻壳会员专享字体，需开通稻壳会员</div>
<!-- watermark -->
<div class="t" style="left:2489px;top:1634px;font-size:39.500px;color:#c4c5c8;line-height:48px;height:48px">激活 <span style="letter-spacing:1.100px;margin-left:2px">Windows</span></div>
<div class="t" style="left:2489px;top:1682px;font-size:27.200px;color:#c8c9cc;line-height:36px;height:36px">转到<span style="margin:0 2px 0 3px">“</span>设置<span style="margin:0 1px 0 3px">“</span>以激活 <span style="letter-spacing:1.400px;margin-left:5px">Windows</span>。</div>
<svg width="0" height="0" style="left:0;top:0"><defs>
 <g id="hexb"><path d="M13.500 1l11 6.200a2 2 0 0 1 1 1.700v11.200a2 2 0 0 1-1 1.700l-11 6.200-11-6.200a2 2 0 0 1-1-1.700V8.900a2 2 0 0 1 1-1.700z" fill="#e8480f"/><path d="M12 21.500c-1.200-4-.7-8 1.300-11.500.9 4 .5 8-1.300 11.500zM13.500 21.500c.8-3.600 3-6.300 6-7.500-.9 3.600-3 6.200-6 7.500zM11 21c-1.400-1-3-2.800-3.500-5 2 .6 3.300 2.400 3.500 5z" fill="#fff"/></g>
 <g id="hexr"><path d="M13.500 1l11 6.200a2 2 0 0 1 1 1.700v11.200a2 2 0 0 1-1 1.700l-11 6.200-11-6.200a2 2 0 0 1-1-1.700V8.900a2 2 0 0 1 1-1.700z" fill="#f0503a"/><path d="M12 21.500c-1.200-4-.7-8 1.300-11.500.9 4 .5 8-1.300 11.500zM13.500 21.500c.8-3.600 3-6.300 6-7.500-.9 3.600-3 6.200-6 7.500zM11 21c-1.400-1-3-2.800-3.500-5 2 .6 3.300 2.400 3.500 5z" fill="#fff"/></g>
</defs></svg>
<!-- ===== right sidebar ===== -->
<div class="a" style="left:2913px;top:431px;width:85px;height:1299px;background:#f8f9fa"></div>
<div class="vs" style="left:2913px;top:431px;height:1299px;background:#e6e7ea"></div>
<div class="a" style="left:2935px;top:453px;width:40px;height:2px;background:#dcdde0;box-shadow:0 6px 0 #dcdde0"></div>
<svg style="left:2938px;top:500px" width="33" height="32" viewBox="0 0 33 32"><path class="ic" d="M30.500 1.500c-8 0-14 3.500-18 11l-5 1.500-3 4.500 5.500.5 4 4 .5 5.500 4.500-3 1.500-5c7.500-4 10.500-10.500 10-19z" style="stroke-width:2"/><circle class="ic" cx="21" cy="11" r="2.800" style="stroke-width:2"/><path class="ic" d="M3 24l3.500-3.500M4.500 29.500l5-5M10 30l2.500-2.500" style="stroke-width:2"/></svg>
<svg style="left:2938px;top:571px" width="33" height="30" viewBox="0 0 33 30"><circle class="ic" cx="6" cy="6" r="4" style="stroke-width:2"/><path class="ic" d="M10 6h22" style="stroke-width:2"/><circle class="ic" cx="24" cy="23" r="4" style="stroke-width:2"/><path class="ic" d="M1 23h19M28 23h4" style="stroke-width:2"/></svg>
<svg style="left:2938px;top:640px" width="33" height="33" viewBox="0 0 33 33"><path class="ic" d="M19.500 1.500l3.400 8 8.600.8-6.500 5.700 2 8.500-7.500-4.500-7.500 4.500 2-8.500-6.500-5.700 8.600-.8z" style="stroke-width:2"/><path class="ic" d="M2 22l4-3.500M4 29l6-5.500M12 31l3-3" style="stroke-width:2"/></svg>
<svg style="left:2938px;top:711px" width="33" height="31" viewBox="0 0 33 31"><path class="ic" d="M23.500 2.500H1.500v22h15M12.500 20l4.500 4.500-4.500 4.500" style="stroke-width:2"/><path class="ic" d="M7.500 17V8h24v20H23.500" style="stroke-width:2"/></svg>
<svg style="left:2938px;top:781px" width="32" height="32" viewBox="0 0 32 32"><circle class="ic" cx="16" cy="16" r="14" style="stroke-width:2"/><path class="ic" d="M11 12.500a5 5 0 1 1 7.500 4.300c-1.700 1-2.500 2-2.500 3.700" style="stroke-width:2"/><circle cx="16" cy="24.500" r="1.500" fill="#4a4c50"/></svg>
<svg style="left:2938px;top:852px" width="34" height="31" viewBox="0 0 34 31"><path class="ic" d="M2.500 12V8a5.500 5.500 0 0 1 5.500-5.500h15A5.500 5.500 0 0 1 28.500 8v3.500" style="stroke-width:2"/><path class="ic" d="M2.500 11.500c.3 3.600 5 3.600 5.300 0 .3 3.600 5 3.600 5.300 0" style="stroke-width:1.800"/><path class="ic" d="M4 16v12h9" style="stroke-width:2"/><path class="ic" d="M24 29c-3.500-.5-6-3-6.200-7 3.200.2 5.700 2.800 6.200 7zM24 29c3.800-.5 6.800-3 7-7.500-3.800.3-6.500 3.200-7 7.500zM24 26.500c-1.800-4-1-8 1.200-10.500 2 3.200 1.600 7.200-1.200 10.500z" style="stroke-width:1.700"/></svg>
<svg style="left:2939px;top:920px" width="30" height="34" viewBox="0 0 30 34"><path class="ic" d="M10 26c-5-2.500-8.500-6.500-8.500-12a13.500 13.500 0 0 1 27 0c0 5.500-3.500 9.500-8.500 12v3.500a3 3 0 0 1-3 3h-4a3 3 0 0 1-3-3z" style="stroke-width:2"/><path class="ic" d="M16.500 7l-5.500 8h8l-5.500 8" style="stroke-width:2"/></svg>
<div class="a" style="left:2918px;top:985px;width:78px;height:1.500px;background:#e6e7ea"></div>
<div class="a" style="left:2923px;top:1002px;width:65px;height:64px;border-radius:5px;background:#d9dbe3"></div>
<svg style="left:2939px;top:1019px" width="29" height="27" viewBox="0 0 29 27"><path d="M2 6V1.500h25V6M14.500 1.500v24M9 25.500h11" fill="none" stroke="#55575b" stroke-width="2"/></svg>
<div class="a" style="left:2918px;top:1645px;width:78px;height:1.500px;background:#ebecee"></div>
<svg style="left:2937px;top:1686px" width="34" height="12" viewBox="0 0 34 12"><g fill="none" stroke="#3a3c40" stroke-width="2.200"><circle cx="5" cy="6" r="3.600"/><circle cx="17" cy="6" r="3.600"/><circle cx="29" cy="6" r="3.600"/></g></svg>

<!-- ===== status bar ===== -->
<div class="a" style="left:2px;top:1730px;width:2996px;height:62px;background:#f7f8f9;border-top:1px solid #e6e7ea"></div>
<div class="t st" style="left:22px">幻灯片 <span style="letter-spacing:1px">7 / 14</span></div>
<div class="vs" style="left:182px;top:1745px;height:36px"></div>
<div class="t st" style="left:203px"><span style="letter-spacing:1px">Office</span> 主题</div>
<div class="vs" style="left:343px;top:1745px;height:36px"></div>
<svg style="left:366px;top:1746px" width="31" height="30" viewBox="0 0 31 30"><path d="M1.500 6V1.500h17V6M10 1.500v25M6 27h8" fill="none" stroke="#4a4c50" stroke-width="2"/><path d="M21 16a4 4 0 1 1 6 3.400c-1.400.9-2 1.800-2 3.100" fill="none" stroke="#4a4c50" stroke-width="2"/><circle cx="25" cy="27" r="1.400" fill="#4a4c50"/></svg>
<div class="t st" style="left:401px">缺失字体</div>
<div class="vs" style="left:517px;top:1745px;height:36px"></div>
<svg style="left:1735px;top:1747px" width="29" height="31" viewBox="0 0 29 31"><path d="M14.500 1.500l12 6v13l-12 9-12-9v-13z M2.500 7.500l12 7 7-4 M14.500 14.500v14" fill="none" stroke="#8a8c90" stroke-width="2" stroke-linejoin="round"/></svg>
<div class="t st" style="left:1772px;color:#8a8c90">智能美化</div>
<svg style="left:1882px;top:1759px" width="12" height="8" viewBox="0 0 12 8"><path d="M6 1l5 6H1z" fill="#5a5c60"/></svg>
<div class="vs" style="left:1916px;top:1745px;height:36px"></div>
<svg style="left:1938px;top:1748px" width="32" height="28" viewBox="0 0 32 28"><path d="M1 4h11M1 14h30M1 24.500h30M17 1l5.500 5L28 1" fill="none" stroke="#3a3c40" stroke-width="2.200"/></svg>
<div class="t st" style="left:1975px">备注</div>
<div class="car" style="left:2031px;top:1761px;border-left-width:4.500px;border-right-width:4.500px;border-top-width:5px"></div>
<svg style="left:2055px;top:1745px" width="32" height="32" viewBox="0 0 32 32"><path d="M18 6.500H1.500v22l5-4.500H27V15 M25 1v11M19.500 6.500h11" fill="none" stroke="#3a3c40" stroke-width="2.200"/></svg>
<div class="t st" style="left:2093px">批注</div>
<div class="vs" style="left:2160px;top:1745px;height:36px"></div>
<div class="a" style="left:2178px;top:1738px;width:44px;height:47px;border-radius:3px;background:#e1e2e7"></div>
<svg style="left:2185px;top:1747px" width="30" height="29" viewBox="0 0 30 29"><path d="M1.500 1.500h27v26h-27z M9.500 1.500v26 M9.500 19h19" fill="none" stroke="#3a3c40" stroke-width="2.200"/></svg>
<svg style="left:2237px;top:1748px" width="28" height="28" viewBox="0 0 28 28"><g fill="none" stroke="#3a3c40" stroke-width="2.200"><rect x="1.500" y="1.500" width="9.500" height="9.500"/><rect x="17" y="1.500" width="9.500" height="9.500"/><rect x="1.500" y="17" width="9.500" height="9.500"/><rect x="17" y="17" width="9.500" height="9.500"/></g></svg>
<svg style="left:2284px;top:1747px" width="32" height="30" viewBox="0 0 32 30"><path d="M16 5c-3-3-8-3.500-14.500-3.500v22c6.500 0 11.500.5 14.500 3.500 3-3 8-3.500 14.500-3.500v-22c-6.500 0-11.500.5-14.500 3.500z M16 5v22" fill="none" stroke="#3a3c40" stroke-width="2.200" stroke-linejoin="round"/></svg>
<div class="vs" style="left:2339px;top:1745px;height:36px"></div>
<div class="a" style="left:2357px;top:1738px;width:61px;height:47px;border-radius:3px;background:#767a93"></div>
<svg style="left:2380px;top:1750px" width="19" height="25" viewBox="0 0 19 25"><path d="M1 1l17 11.500L1 24z" fill="#fff"/></svg>
<div class="car" style="left:2426px;top:1761px"></div>
<div class="vs" style="left:2455px;top:1745px;height:36px"></div>
<svg style="left:2480px;top:1748px" width="29" height="28" viewBox="0 0 29 28"><path d="M8 1.500H1.500V8M21 1.500h6.500V8M8 26.500H1.500V20M21 26.500h6.500V20" fill="none" stroke="#3a3c40" stroke-width="2.200"/><rect x="8.500" y="8" width="12" height="12" rx="1" fill="none" stroke="#3a3c40" stroke-width="2.200"/></svg>
<div class="t st" style="left:2524px">75%</div>
<div class="car" style="left:2579px;top:1761px"></div>
<div class="a" style="left:2612px;top:1760px;width:20px;height:3.500px;background:#2e3033"></div>
<div class="a" style="left:2655px;top:1761px;width:90px;height:2px;background:#4a4c50"></div>
<div class="a" style="left:2760px;top:1761.500px;width:163px;height:1px;background:#dcdde0"></div>
<div class="a" style="left:2788px;top:1758px;width:1px;height:8px;background:#dcdde0"></div>
<div class="a" style="left:2738px;top:1751px;width:24px;height:24px;border-radius:12px;background:#e9e9eb;border:2px solid #4a4c50"></div>
<svg style="left:2946px;top:1752px" width="21" height="21" viewBox="0 0 21 21"><path d="M10.500 1v19M1 10.500h19" stroke="#2e3033" stroke-width="3.200" fill="none"/></svg>
<!-- ===== bottom label ===== -->
<div class="a" style="left:2px;top:1870px;width:330px;height:47px;background:#16171a"></div>
<svg style="left:4px;top:1879px" width="29" height="30" viewBox="0 0 29 30"><rect x="0" y="0" width="28.500" height="21" rx="3.500" fill="#fff"/><path d="M6.500 24h15.500a2 2 0 0 1 0 4.500H6.500a2 2 0 0 1 0-4.500z" fill="#fff"/><path d="M7 16c.5-5 4-8 9-8V4.500l6.500 6-6.500 6V13c-4 0-7 1-9 3z" fill="#16171a"/></svg>
<svg style="left:38px;top:1879px" width="26" height="31" viewBox="0 0 26 31"><rect x="6.500" y="0.500" width="13" height="21" rx="6.500" fill="#4ce04a"/><path d="M1.500 13.500a11.500 11.500 0 0 0 23 0 M13 25.500v4.500" fill="none" stroke="#fff" stroke-width="2.800" stroke-linecap="round"/></svg>
<div class="t" style="left:68px;top:1873px;font-size:32px;color:#fff;line-height:44px;height:44px">顾毓宁的屏幕共享</div>
</body>
</html>
